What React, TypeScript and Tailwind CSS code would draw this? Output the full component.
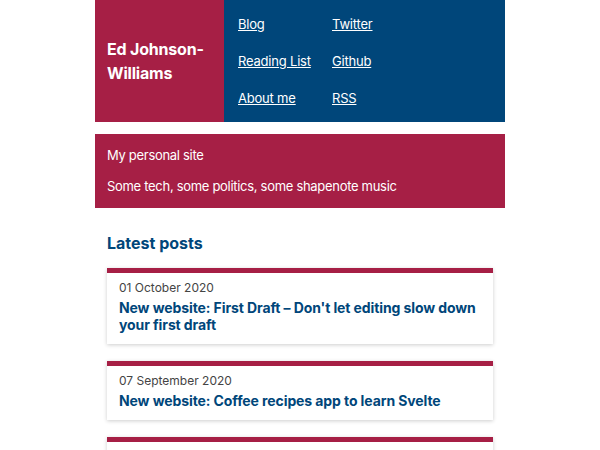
import React from "react";

const posts = [
  {
    date: "01 October 2020",
    title: "New website: First Draft – Don't let editing slow down your first draft",
  },
  { date: "07 September 2020", title: "New website: Coffee recipes app to learn Svelte" },
  { date: "01 August 2020", title: "Reading list" },
];

const App: React.FC = () => {
  return (
    <div className="min-h-screen bg-white font-['Inter',sans-serif]">
      <div className="mx-auto w-[410px]">
        <header className="flex h-[122px]">
          <div className="flex w-[129px] items-center bg-[#a61f45] px-3">
            <h1 className="text-[16px] font-bold leading-6 tracking-[-0.2px] text-white">
              Ed Johnson-Williams
            </h1>
          </div>
          <nav className="flex flex-1 items-start bg-[#00467a] pl-[14px] pt-[15px]">
            <ul className="grid grid-cols-[94px_auto] content-start gap-y-[18px] text-[13px] leading-[19px] tracking-[-0.2px] text-white">
              <li><a href="#" className="underline">Blog</a></li>
              <li><a href="#" className="underline">Twitter</a></li>
              <li><a href="#" className="underline">Reading List</a></li>
              <li><a href="#" className="underline">Github</a></li>
              <li><a href="#" className="underline">About me</a></li>
              <li><a href="#" className="underline">RSS</a></li>
            </ul>
          </nav>
        </header>

        <div className="mt-3 bg-[#a61f45] px-3 py-[12px] text-[13px] leading-[19px] tracking-[-0.3px] text-white">
          <p>My personal site</p>
          <p className="mt-3">Some tech, some politics, some shapenote music</p>
        </div>

        <main className="px-3">
          <h2 className="mt-[23px] text-[16px] font-bold leading-6 text-[#00467a]">Latest posts</h2>
          <ul className="mt-[13px] flex flex-col gap-[17px]">
            {posts.map((p) => (
              <li
                key={p.date}
                className="border-t-[5px] border-[#a61f45] bg-white px-3 pb-[11px] pt-[6px] shadow-[0_1px_4px_rgba(0,0,0,0.2)]"
              >
                <div className="text-[12px] leading-[18px] text-[#444]">{p.date}</div>
                <a
                  href="#"
                  className="mt-[2px] block text-[14px] font-bold leading-[17px] tracking-[-0.1px] text-[#00467a]"
                >
                  {p.title}
                </a>
              </li>
            ))}
          </ul>
        </main>
      </div>
    </div>
  );
};

export default App;
